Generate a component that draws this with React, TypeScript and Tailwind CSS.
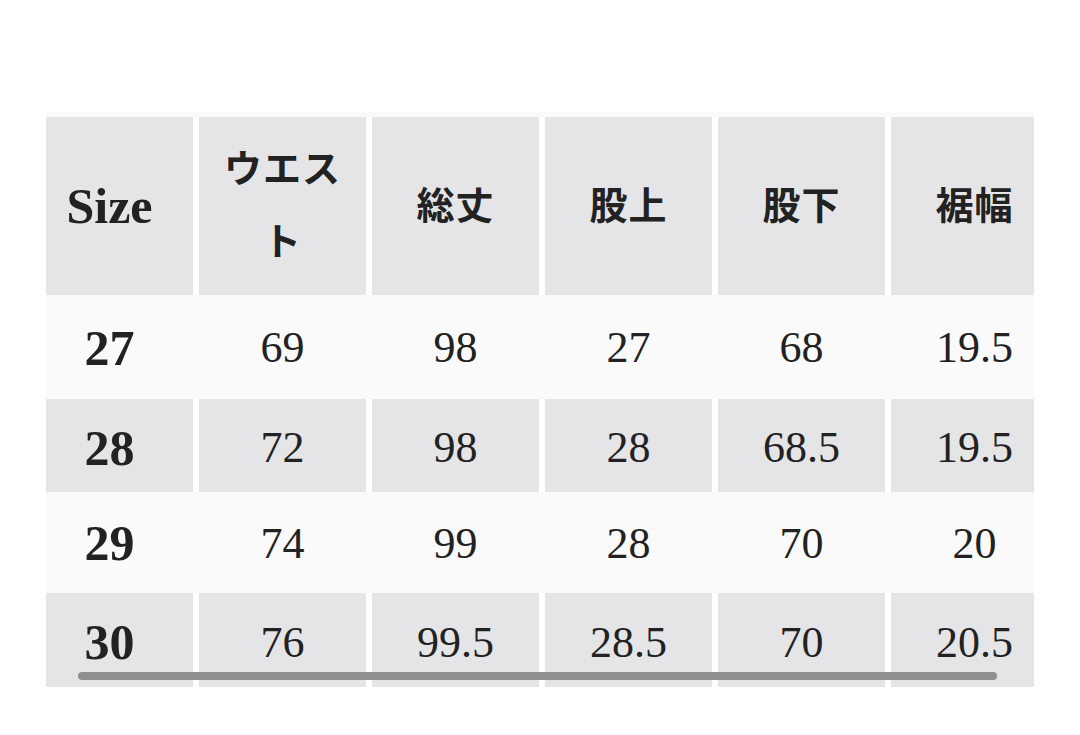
const headers = ['ウエスト', '総丈', '股上', '股下', '裾幅'];

const rows = [
  { size: '27', values: ['69', '98', '27', '68', '19.5'] },
  { size: '28', values: ['72', '98', '28', '68.5', '19.5'] },
  { size: '29', values: ['74', '99', '28', '70', '20'] },
  { size: '30', values: ['76', '99.5', '28.5', '70', '20.5'] },
];

const rowHeights = ['h-[101px]', 'h-[93px]', 'h-[98px]', 'h-[94px]'];

const serif = "font-['Liberation_Serif','Noto_Sans_CJK_JP',serif]";

export default function App() {
  return (
    <div className={`min-h-[735px] w-[1080px] bg-white pl-[46px] pt-[112px] text-[#222] ${serif}`}>
      <div className="relative w-[988px] overflow-hidden bg-[#fafafa] pt-[5px]">
        <div className="w-[1012px]">
          {/* header */}
          <div className="flex h-[178px] gap-[6px] bg-white">
            <div className="flex w-[147px] shrink-0 items-center justify-center bg-[#e5e5e8] pr-[20px] text-[50px] font-bold">
              Size
            </div>
            {headers.map((h) => (
              <div
                key={h}
                className="flex w-[167px] shrink-0 items-center justify-center bg-[#e5e5e8] px-[10px] text-center text-[38px] leading-[73px] tracking-[1px] font-bold"
              >
                {h}
              </div>
            ))}
          </div>

          {rows.map((r, i) => {
            const gray = i % 2 === 1;
            return (
              <div
                key={r.size}
                className={`flex gap-[6px] ${rowHeights[i]} ${gray ? 'mt-[3px] bg-white' : 'bg-[#fafafa]'}`}
              >
                <div
                  className={`flex w-[147px] shrink-0 items-center justify-center pt-[5px] pr-[20px] text-[50px] font-bold ${gray ? 'bg-[#e5e5e8]' : ''}`}
                >
                  {r.size}
                </div>
                {r.values.map((v, j) => (
                  <div
                    key={j}
                    className={`flex w-[167px] shrink-0 items-center justify-center pt-[5px] text-[44px] ${gray ? 'bg-[#e5e5e8]' : ''}`}
                  >
                    {v}
                  </div>
                ))}
              </div>
            );
          })}
        </div>

        {/* horizontal scrollbar */}
        <div className="absolute bottom-[7px] left-[32px] h-[8px] w-[919px] rounded-full bg-[#8f8f8f]" />
      </div>
    </div>
  );
}
